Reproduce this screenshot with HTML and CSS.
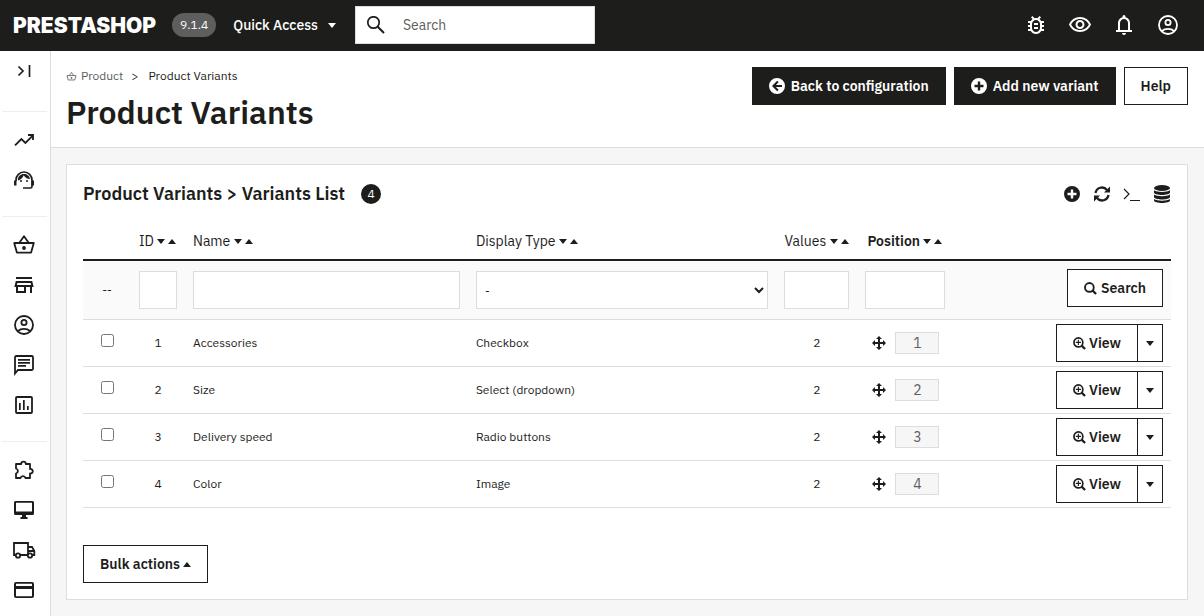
FILE: index.html
```html
<!DOCTYPE html>
<html lang="en">
<head>
<meta charset="utf-8">
<meta name="viewport" content="width=device-width, initial-scale=1">
<title>Product Variants</title>
<link rel="stylesheet" href="styles.css">
</head>
<body>
<svg class="sprite" aria-hidden="true">
  <symbol id="bug" viewBox="0 0 24 24"><path d="M20 8h-2.81c-.45-.78-1.07-1.45-1.82-1.96L17 4.41 15.59 3l-2.17 2.17C12.96 5.06 12.49 5 12 5s-.96.06-1.41.17L8.41 3 7 4.41l1.62 1.63C7.88 6.55 7.26 7.22 6.81 8H4v2h2.09c-.05.33-.09.66-.09 1v1H4v2h2v1c0 .34.04.67.09 1H4v2h2.81c1.04 1.79 2.97 3 5.19 3s4.15-1.21 5.19-3H20v-2h-2.09c.05-.33.09-.66.09-1v-1h2v-2h-2v-1c0-.34-.04-.67-.09-1H20V8zm-4 4v3c0 2.200-1.800 4-4 4s-4-1.800-4-4v-4c0-2.200 1.800-4 4-4s4 1.800 4 4v1zm-6 2h4v2h-4zm0-4h4v2h-4z"/></symbol>
  <symbol id="eye" viewBox="0 0 24 24"><path d="M12 6c3.790 0 7.170 2.130 8.820 5.500C19.170 14.870 15.790 17 12 17s-7.170-2.130-8.820-5.500C4.830 8.130 8.210 6 12 6m0-2C7 4 2.730 7.110 1 11.500 2.730 15.890 7 19 12 19s9.270-3.110 11-7.500C21.270 7.110 17 4 12 4zm0 5c1.380 0 2.500 1.120 2.500 2.500S13.380 14 12 14s-2.500-1.120-2.500-2.500S10.620 9 12 9m0-2c-2.480 0-4.500 2.020-4.500 4.500S9.520 16 12 16s4.500-2.020 4.500-4.500S14.480 7 12 7z"/></symbol>
  <symbol id="bell" viewBox="0 0 24 24"><path d="M4 19v-2h2v-7c0-2.800 1.900-5.200 4.500-5.800v-.7a1.500 1.500 0 0 1 3 0v.7c2.600.6 4.500 3 4.500 5.800v7h2v2zM8 17h8v-7c0-2.200-1.800-4-4-4s-4 1.800-4 4zM10 20h4a2 2 0 0 1-4 0z"/></symbol>
  <symbol id="account" viewBox="0 0 24 24"><g fill="none" stroke="currentColor" stroke-width="1.800"><circle cx="12" cy="12" r="9"/><circle cx="12" cy="9.500" r="2.600"/><path d="M5.700 18.200c3.600-3 9-3 12.600 0"/></g></symbol>
  <symbol id="search" viewBox="0 0 24 24"><circle cx="9.500" cy="9.500" r="5.700" fill="none" stroke="currentColor" stroke-width="1.700"/><path d="m13.700 13.700 6.300 6.300" stroke="currentColor" stroke-width="2"/></symbol>
  <symbol id="expand" viewBox="0 0 24 24"><path d="M6.500 7.500 11 12l-4.500 4.500M17.500 6v12" fill="none" stroke="currentColor" stroke-width="1.700"/></symbol>
  <symbol id="trend" viewBox="0 0 24 24"><path d="M3 17.300 9.400 11l4 4L20.500 7.900M16 7h5v5" fill="none" stroke="currentColor" stroke-width="1.800"/></symbol>
  <symbol id="support" viewBox="0 0 24 24"><path d="M4 13v-1a8 8 0 0 1 16 0v6.500c0 .8-.5 1.500-1.500 1.500H11" fill="none" stroke="currentColor" stroke-width="1.700"/><path d="M2 12.500h2.500v5H2zM19.500 12.500H22v5h-2.500zM6 12.600C5.600 8.200 8.500 6 12 6c3 0 5.600 2 6 5-2.700 0-5-1.400-6.300-3.700C10.900 9.700 8.800 11.800 6 12.600z"/><circle cx="9" cy="13" r="1"/><circle cx="15" cy="13" r="1"/></symbol>
  <symbol id="basket" viewBox="0 0 24 24"><path d="M2.200 10h19.600l-2.700 9.600H4.900zM7.200 10 12 3.200l4.800 6.800" fill="none" stroke="currentColor" stroke-width="1.800" stroke-linejoin="round"/><circle cx="12" cy="15" r="1.900"/></symbol>
  <symbol id="store" viewBox="0 0 24 24"><path d="M4 4h16v2H4z"/><path d="M4.600 9h14.800l1 4H3.600zM5 13v6h8v-6M19 13v7" fill="none" stroke="currentColor" stroke-width="2"/></symbol>
  <symbol id="chat" viewBox="0 0 24 24"><path d="M3 20.500V4.200c0-.7.500-1.200 1.200-1.200h15.600c.7 0 1.200.5 1.200 1.200v11.600c0 .7-.5 1.200-1.200 1.200H6z" fill="none" stroke="currentColor" stroke-width="1.800"/><path d="M6 6h12v1.700H6zM6 9h12v1.700H6zM6 12h8v1.700H6z"/></symbol>
  <symbol id="chart" viewBox="0 0 24 24"><rect x="4" y="4" width="16" height="16" rx="1" fill="none" stroke="currentColor" stroke-width="1.800"/><path d="M7 10h1.700v7H7zM11 7h1.700v10H11zM15 13h1.700v4H15z"/></symbol>
  <symbol id="puzzle" viewBox="0 0 24 24"><path d="M4 6h5.200a2.300 2.300 0 1 1 4.600 0H18v5a2.300 2.300 0 1 1 0 4.500V20h-4.500a2.600 2.600 0 0 0-5 0H4v-4.500a2.600 2.600 0 0 0 0-5z" fill="none" stroke="currentColor" stroke-width="1.800" stroke-linejoin="round"/></symbol>
  <symbol id="desktop" viewBox="0 0 24 24"><path d="M20.500 3h-17A1.500 1.500 0 0 0 2 4.500v11A1.500 1.500 0 0 0 3.500 17H10v2H8.500v2h7v-2H14v-2h6.500a1.500 1.500 0 0 0 1.500-1.500v-11A1.500 1.500 0 0 0 20.500 3zM20 13.500H4V4.800h16z"/></symbol>
  <symbol id="truck" viewBox="0 0 24 24"><path d="M4 17H2V5h14v12H8M16 9h4l2.300 4v4H20" fill="none" stroke="currentColor" stroke-width="1.800"/><path d="M16 12h7v2h-7z"/><circle cx="6" cy="17.500" r="2.200" fill="#fff" stroke="currentColor" stroke-width="1.800"/><circle cx="18" cy="17.500" r="2.200" fill="#fff" stroke="currentColor" stroke-width="1.800"/></symbol>
  <symbol id="card" viewBox="0 0 24 24"><path d="M20 4H4a2 2 0 0 0-2 2v12c0 1.100.9 2 2 2h16a2 2 0 0 0 2-2V6a2 2 0 0 0-2-2zm0 14.200H4V11h16zM20 8H4V5.800h16z"/></symbol>
  <symbol id="back" viewBox="0 0 16 16"><path fill-rule="evenodd" d="M8 0a8 8 0 1 0 0 16A8 8 0 0 0 8 0zm.2 2.800L9.600 4.200 6.900 7H13v2H6.900l2.700 2.800-1.400 1.400L3 8z"/></symbol>
  <symbol id="plus" viewBox="0 0 16 16"><path fill-rule="evenodd" d="M8 0a8 8 0 1 0 0 16A8 8 0 0 0 8 0zM6.800 3.500h2.400v3.300h3.300v2.400H9.200v3.300H6.800V9.200H3.500V6.800h3.300z"/></symbol>
  <symbol id="refresh" viewBox="0 0 16 16"><path d="M1.500 7A6.500 6.500 0 0 1 13 4M14.500 9A6.500 6.500 0 0 1 3 12" fill="none" stroke="currentColor" stroke-width="2.300"/><path d="M16 .5v6h-6zM0 15.500v-6h6z"/></symbol>
  <symbol id="terminal" viewBox="0 0 18 16"><path d="m1 3 5 5-5 5M7 14.500h10" fill="none" stroke="currentColor" stroke-width="1.200"/></symbol>
  <symbol id="database" viewBox="0 0 16 18"><ellipse cx="8" cy="3" rx="8" ry="3"/><path d="M0 5.200c3 2.300 13 2.300 16 0v2.300c0 3.300-16 3.300-16 0zM0 9.600c3 2.300 13 2.300 16 0v2.300c0 3.300-16 3.300-16 0zM0 14c3 2.300 13 2.300 16 0v1.500c0 3.300-16 3.300-16 0z"/></symbol>
  <symbol id="glass" viewBox="0 0 14 14"><circle cx="5.800" cy="5.800" r="4.700" fill="none" stroke="currentColor" stroke-width="2"/><path d="m9 9 4 4" stroke="currentColor" stroke-width="2.400"/></symbol>
  <symbol id="zoomin" viewBox="0 0 14 14"><circle cx="5.800" cy="5.800" r="4.800" fill="none" stroke="currentColor" stroke-width="1.800"/><path d="m9.300 9.300 3.700 3.700" stroke="currentColor" stroke-width="2.400"/><path d="M5.800 3v5.600M3 5.800h5.600" stroke="currentColor" stroke-width="1.200"/></symbol>
  <symbol id="move" viewBox="0 0 14 14"><path d="m7 0 3 3H8v3h3V4l3 3-3 3V8H8v3h2l-3 3-3-3h2V8H3v2L0 7l3-3v2h3V3H4z"/></symbol>
</svg>

<header class="topbar">
  <a class="logo" href="#">PRESTASHOP</a>
  <span class="version">9.1.4</span>
  <button class="quick" type="button">Quick Access <i class="caret"></i></button>
  <label class="search"><svg class="icon"><use href="#search"/></svg><input class="search-input" type="text" placeholder="Search" aria-label="Search"></label>
  <nav class="tools" aria-label="Tools">
    <a href="#" aria-label="Debug mode"><svg class="icon"><use href="#bug"/></svg></a>
    <a href="#" aria-label="View my store"><svg class="icon"><use href="#eye"/></svg></a>
    <a href="#" aria-label="Notifications"><svg class="icon"><use href="#bell"/></svg></a>
    <a href="#" aria-label="Account"><svg class="icon"><use href="#account"/></svg></a>
  </nav>
</header>

<div class="layout">
  <nav class="sidebar" aria-label="Main menu">
    <button class="side-item collapse" type="button" aria-label="Expand menu"><svg class="icon"><use href="#expand"/></svg></button>
    <div class="side-group">
      <a class="side-item" href="#" aria-label="Dashboard"><svg class="icon"><use href="#trend"/></svg></a>
      <a class="side-item" href="#" aria-label="Support"><svg class="icon"><use href="#support"/></svg></a>
    </div>
    <div class="side-group">
      <a class="side-item" href="#" aria-label="Orders"><svg class="icon"><use href="#basket"/></svg></a>
      <a class="side-item" href="#" aria-label="Catalog"><svg class="icon"><use href="#store"/></svg></a>
      <a class="side-item" href="#" aria-label="Customers"><svg class="icon"><use href="#account"/></svg></a>
      <a class="side-item" href="#" aria-label="Customer service"><svg class="icon"><use href="#chat"/></svg></a>
      <a class="side-item" href="#" aria-label="Stats"><svg class="icon"><use href="#chart"/></svg></a>
    </div>
    <div class="side-group">
      <a class="side-item" href="#" aria-label="Modules"><svg class="icon"><use href="#puzzle"/></svg></a>
      <a class="side-item" href="#" aria-label="Design"><svg class="icon"><use href="#desktop"/></svg></a>
      <a class="side-item" href="#" aria-label="Shipping"><svg class="icon"><use href="#truck"/></svg></a>
      <a class="side-item" href="#" aria-label="Payment"><svg class="icon"><use href="#card"/></svg></a>
    </div>
  </nav>

  <main class="main">
    <div class="page-head">
      <div>
        <nav class="crumbs" aria-label="Breadcrumb">
          <a class="crumb" href="#"><svg class="crumb-icon"><use href="#basket"/></svg>Product</a>
          <span>&gt;</span>
          <a class="crumb-current" href="#">Product Variants</a>
        </nav>
        <h1 class="title">Product Variants</h1>
      </div>
      <div class="actions">
        <button class="btn btn-dark" type="button"><svg class="icon-16"><use href="#back"/></svg>Back to configuration</button>
        <button class="btn btn-dark" type="button"><svg class="icon-16"><use href="#plus"/></svg>Add new variant</button>
        <button class="btn" type="button">Help</button>
      </div>
    </div>

    <section class="panel">
      <div class="panel-head">
        <h2 class="panel-title">Product Variants &gt; Variants List</h2>
        <span class="count">4</span>
        <div class="panel-tools">
          <a href="#" aria-label="Add new"><svg class="icon-16"><use href="#plus"/></svg></a>
          <a href="#" aria-label="Refresh list"><svg class="icon-16"><use href="#refresh"/></svg></a>
          <a href="#" aria-label="Show SQL query"><svg class="icon-18"><use href="#terminal"/></svg></a>
          <a href="#" aria-label="Export to SQL manager"><svg class="icon-18"><use href="#database"/></svg></a>
        </div>
      </div>

      <table class="grid">
        <colgroup><col class="c-check"><col class="c-id"><col class="c-name"><col><col class="c-values"><col class="c-pos"><col class="c-actions"></colgroup>
        <thead>
          <tr class="heads">
            <th></th>
            <th>ID <i class="caret"></i><i class="caret up"></i></th>
            <th>Name <i class="caret"></i><i class="caret up"></i></th>
            <th>Display Type <i class="caret"></i><i class="caret up"></i></th>
            <th>Values <i class="caret"></i><i class="caret up"></i></th>
            <th class="sorted">Position <i class="caret"></i><i class="caret up"></i></th>
            <th></th>
          </tr>
          <tr class="filters">
            <td class="center">--</td>
            <td><input class="field" type="text" aria-label="Filter by ID"></td>
            <td><input class="field" type="text" aria-label="Filter by name"></td>
            <td><select class="field" aria-label="Filter by display type"><option>-</option></select></td>
            <td><input class="field" type="text" aria-label="Filter by values"></td>
            <td><input class="field" type="text" aria-label="Filter by position"></td>
            <td class="filter-action"><button class="btn" type="button"><svg class="icon-13"><use href="#glass"/></svg>Search</button></td>
          </tr>
        </thead>
        <tbody>
          <tr>
            <td><input class="check" type="checkbox" aria-label="Select Accessories"></td><td class="center">1</td><td>Accessories</td><td>Checkbox</td><td class="center">2</td>
            <td><div class="position"><svg class="icon-14"><use href="#move"/></svg><span class="rank">1</span></div></td>
            <td><div class="split"><button class="btn" type="button"><svg class="icon-13"><use href="#zoomin"/></svg>View</button><button class="btn toggle" type="button" aria-label="More actions"><i class="caret"></i></button></div></td>
          </tr>
          <tr>
            <td><input class="check" type="checkbox" aria-label="Select Size"></td><td class="center">2</td><td>Size</td><td>Select (dropdown)</td><td class="center">2</td>
            <td><div class="position"><svg class="icon-14"><use href="#move"/></svg><span class="rank">2</span></div></td>
            <td><div class="split"><button class="btn" type="button"><svg class="icon-13"><use href="#zoomin"/></svg>View</button><button class="btn toggle" type="button" aria-label="More actions"><i class="caret"></i></button></div></td>
          </tr>
          <tr>
            <td><input class="check" type="checkbox" aria-label="Select Delivery speed"></td><td class="center">3</td><td>Delivery speed</td><td>Radio buttons</td><td class="center">2</td>
            <td><div class="position"><svg class="icon-14"><use href="#move"/></svg><span class="rank">3</span></div></td>
            <td><div class="split"><button class="btn" type="button"><svg class="icon-13"><use href="#zoomin"/></svg>View</button><button class="btn toggle" type="button" aria-label="More actions"><i class="caret"></i></button></div></td>
          </tr>
          <tr>
            <td><input class="check" type="checkbox" aria-label="Select Color"></td><td class="center">4</td><td>Color</td><td>Image</td><td class="center">2</td>
            <td><div class="position"><svg class="icon-14"><use href="#move"/></svg><span class="rank">4</span></div></td>
            <td><div class="split"><button class="btn" type="button"><svg class="icon-13"><use href="#zoomin"/></svg>View</button><button class="btn toggle" type="button" aria-label="More actions"><i class="caret"></i></button></div></td>
          </tr>
        </tbody>
      </table>

      <button class="btn bulk" type="button">Bulk actions<i class="caret up"></i></button>
    </section>
  </main>
</div>
</body>
</html>
```
FILE: styles.css
```css
* { box-sizing: border-box; }

body {
  margin: 0;
  min-height: 100vh;
  display: flex;
  flex-direction: column;
  background: #f6f6f6;
  color: #1d1d1b;
  font: 14px/20px "IBM Plex Sans", "Noto Sans", sans-serif;
}

a { color: inherit; text-decoration: none; }
button, input, select { font: inherit; color: inherit; }
svg { display: block; flex: none; fill: currentColor; }
.sprite { position: absolute; width: 0; height: 0; }

.icon { width: 24px; height: 24px; }
.icon-13 { width: 13px; height: 13px; }
.icon-14 { width: 14px; height: 14px; }
.icon-16 { width: 16px; height: 16px; }
.icon-18 { width: 18px; height: 18px; }

.caret {
  display: inline-block;
  border: solid transparent;
  border-width: 5px 4px 0;
  border-top-color: currentColor;
}
.caret.up {
  border-width: 0 4px 5px;
  border-bottom-color: currentColor;
}

/* Top bar */
.topbar {
  display: flex;
  align-items: center;
  min-height: 51px;
  padding: 0 24px 1px 13px;
  background: #1d1d1b;
  color: #fff;
}
.logo { padding-top: 2px; font: 900 21px/24px Inter, sans-serif; }
.version {
  margin-left: 16px;
  padding: 2px 8px;
  border-radius: 12px;
  background: #5e5e5e;
  font-size: 12px;
}
.quick {
  display: flex;
  align-items: center;
  gap: 10px;
  margin-left: 17px;
  padding: 0;
  border: 0;
  background: none;
  font-weight: 500;
  white-space: nowrap;
}
.search {
  display: flex;
  align-items: center;
  gap: 13px;
  width: 240px;
  height: 38px;
  margin-left: 19px;
  padding: 0 8px;
  border: 1px solid #ddd;
  background: #fff;
  color: #1d1d1b;
}
.search-input {
  flex: 1;
  min-width: 0;
  border: 0;
  outline: 0;
  background: none;
}
.search-input::placeholder { color: #5e5e5e; }
.tools { display: flex; gap: 20px; margin-left: auto; }

/* Side menu */
.layout { display: flex; flex: 1; }
.sidebar {
  flex: none;
  width: 51px;
  padding-right: 3px;
  border-right: 1px solid #ddd;
  background: #fff;
}
.side-item {
  display: flex;
  align-items: center;
  justify-content: center;
  width: 100%;
  height: 40px;
  padding: 0;
  border: 0;
  background: none;
}
.collapse { margin-bottom: 20px; }
.side-group {
  margin: 0 0 16px 2px;
  padding-top: 8px;
  border-top: 1px solid #eee;
}
.side-group .side-item { width: 44px; }
.side-group:last-child { margin-bottom: 0; }

/* Page header */
.main { flex: 1; min-width: 0; }
.page-head {
  display: flex;
  justify-content: space-between;
  padding: 16px 16px 15px 15px;
  border-bottom: 1px solid #ddd;
  background: #fff;
}
.crumbs { display: flex; gap: 8px; font-size: 12px; line-height: 18px; }
.crumb { display: flex; align-items: center; gap: 4px; color: #5e5e5e; }
.crumb-icon { width: 11px; height: 11px; }
.crumb-current { margin-left: 2px; }
.title { margin: 7px 0 0; font-size: 32px; line-height: 40px; font-weight: 600; }
.actions { display: flex; align-items: flex-start; gap: 8px; }

.btn {
  display: inline-flex;
  align-items: center;
  justify-content: center;
  gap: 4px;
  height: 38px;
  padding: 0 16px;
  border: 1px solid #1d1d1b;
  background: #fff;
  font-weight: 600;
  white-space: nowrap;
}
.btn-dark { background: #1d1d1b; color: #fff; gap: 6px; }

/* List panel */
.panel {
  margin: 16px 16px 16px 15px;
  padding: 16px;
  border: 1px solid #ddd;
  background: #fff;
}
.panel-head { display: flex; align-items: center; margin-bottom: 16px; min-height: 26px; }
.panel-title { margin: 0; font-size: 18px; line-height: 26px; font-weight: 600; }
.count {
  width: 20px;
  height: 20px;
  margin-left: 16px;
  border-radius: 50%;
  background: #1d1d1b;
  color: #fff;
  font-size: 12px;
  text-align: center;
}
.panel-tools { display: flex; align-items: center; gap: 12px; margin-left: auto; }
.panel-tools a { display: flex; justify-content: center; width: 18px; }

.grid {
  width: 100%;
  table-layout: fixed;
  border-collapse: separate;
  border-spacing: 0;
  font-size: 12px;
}
.c-check { width: 48px; }
.c-id { width: 54px; }
.c-name { width: 26%; }
.c-values { width: 81px; }
.c-pos { width: 96px; }
.c-actions { width: 20%; }
.grid th, .grid td { text-align: left; white-space: nowrap; }
.grid th {
  padding: 8px 0 8px 8px;
  border-bottom: 2px solid #1d1d1b;
  font-size: 14px;
  font-weight: 400;
}
.grid th.sorted { padding-left: 10px; font-weight: 600; }
.grid th .caret { margin-bottom: 2px; }
.grid th .up { margin-left: 3px; }
.grid td { padding: 4px 8px; border-bottom: 1px solid #ddd; }
.grid .filters td { padding: 10px 8px; background: #fafafa; }
.grid .filters .filter-action { padding: 8px; text-align: right; vertical-align: top; font-size: 14px; }
.grid td.center { text-align: center; }

.field {
  display: block;
  width: 100%;
  height: 38px;
  padding: 0 8px;
  border: 1px solid #ddd;
  border-radius: 0;
  background: #fff;
}
select.field { padding: 0 4px; }
.check { display: block; width: 13px; height: 13px; margin: 0 auto 5px; }

.position { display: flex; align-items: center; gap: 9px; padding-left: 7px; }
.rank {
  width: 44px;
  border: 1px solid #ddd;
  background: #f6f6f6;
  color: #5e5e5e;
  font-size: 14px;
  text-align: center;
}
.split { display: flex; justify-content: flex-end; font-size: 14px; }
.split .btn { gap: 3px; }
.split .toggle { width: 25px; padding: 0; border-left: 0; }
.bulk { gap: 3px; margin-top: 37px; }
```
